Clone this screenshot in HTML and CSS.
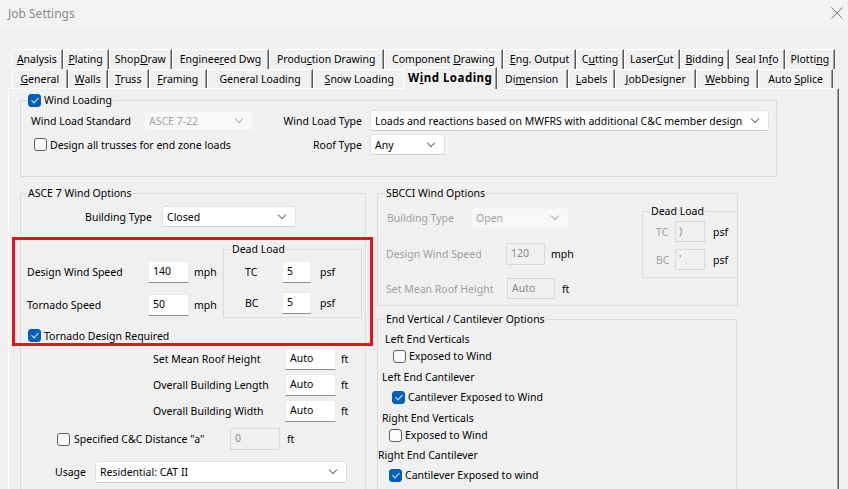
FILE: index.html
```html
<!DOCTYPE html>
<html>
<head>
	<meta charset="utf-8">
	<title>Job Settings</title>
	<link rel="stylesheet" href="styles.css">
</head>
<body>
	<div class="titlebar">
		<span class="title">Job Settings</span>
		<svg class="close" width="12" height="12" viewBox="0 0 12 12"><path d="M0.5 0.5L11.5 11.5M11.5 0.5L0.5 11.5" stroke="#7a7a7a" stroke-width="1"/></svg>
	</div>

	<div class="tabs">
		<ul class="tabrow back">
			<li><u>A</u>nalysis</li>
			<li><u>P</u>lating</li>
			<li>Shop<u>D</u>raw</li>
			<li>Enginee<u>r</u>ed Dwg</li>
			<li>Produ<u>c</u>tion Drawing</li>
			<li>Component <u>D</u>rawing</li>
			<li><u>E</u>ng. Output</li>
			<li>C<u>u</u>tting</li>
			<li>Laser<u>C</u>ut</li>
			<li><u>B</u>idding</li>
			<li>Seal In<u>f</u>o</li>
			<li>Plotti<u>n</u>g</li>
		</ul>
		<ul class="tabrow front">
			<li><u>G</u>eneral</li>
			<li><u>W</u>alls</li>
			<li><u>T</u>russ</li>
			<li><u>F</u>raming</li>
			<li>General Loading</li>
			<li><u>S</u>now Loading</li>
			<li class="current"><span class="face">W<u>i</u>nd Loading</span></li>
			<li>Di<u>m</u>ension</li>
			<li><u>L</u>abels</li>
			<li><u>J</u>obDesigner</li>
			<li><u>W</u>ebbing</li>
			<li>Auto <u>S</u>plice</li>
		</ul>
	</div>

	<div class="panel">
		<fieldset class="grp wind">
			<legend><span class="check"><span class="cb on"></span>Wind Loading</span></legend>
			<div class="wind-grid">
				<span>Wind Load Standard</span>
				<span class="combo off std">ASCE 7-22</span>
				<span class="rlabel">Wind Load Type</span>
				<span class="combo">Loads and reactions based on MWFRS with additional C&amp;C member design</span>
				<span class="check endzone"><span class="cb"></span>Design all trusses for end zone loads</span>
				<span class="rlabel">Roof Type</span>
				<span class="combo roof">Any</span>
			</div>
		</fieldset>

		<div class="cols">
			<fieldset class="grp asce">
				<legend>ASCE 7 Wind Options</legend>
				<div class="bt-row">
					<span class="rlabel">Building Type</span>
					<span class="combo">Closed</span>
				</div>

				<div class="redbox">
					<div class="red-top">
						<div class="speeds">
							<span>Design Wind Speed</span>
							<span class="field">140</span>
							<span class="unit">mph</span>
							<span>Tornado Speed</span>
							<span class="field">50</span>
							<span class="unit">mph</span>
						</div>
						<fieldset class="grp dl">
							<legend>Dead Load</legend>
							<div class="dl-grid">
								<span>TC</span>
								<span class="field">5</span>
								<span class="unit">psf</span>
								<span>BC</span>
								<span class="field">5</span>
								<span class="unit">psf</span>
							</div>
						</fieldset>
					</div>
					<span class="check tornado"><span class="cb on"></span>Tornado Design Required</span>
				</div>

				<div class="dims">
					<span>Set Mean Roof Height</span>
					<span class="field">Auto</span>
					<span class="unit">ft</span>
					<span>Overall Building Length</span>
					<span class="field">Auto</span>
					<span class="unit">ft</span>
					<span>Overall Building Width</span>
					<span class="field">Auto</span>
					<span class="unit">ft</span>
				</div>

				<div class="cc-row">
					<span class="check cc-label"><span class="cb"></span>Specified C&amp;C Distance "a"</span>
					<span class="field off w50">0</span>
					<span>ft</span>
				</div>

				<div class="usage-row">
					<span class="usage-label">Usage</span>
					<span class="combo usage">Residential: CAT II</span>
				</div>
			</fieldset>

			<div class="rightcol">
				<fieldset class="grp sbcci">
					<legend>SBCCI Wind Options</legend>
					<div class="sb-body">
						<div class="sb-left">
							<div class="sb-row first">
								<span class="dim sb-bt">Building Type</span>
								<span class="combo off open">Open</span>
							</div>
							<div class="sb-row second">
								<span class="dim sb-lbl">Design Wind Speed</span>
								<span class="field off w39">120</span>
								<span>mph</span>
							</div>
							<div class="sb-row third">
								<span class="dim sb-lbl">Set Mean Roof Height</span>
								<span class="field off w48">Auto</span>
								<span>ft</span>
							</div>
						</div>
						<fieldset class="grp sb-dl">
							<legend>Dead Load</legend>
							<div class="sb-dl-grid">
								<span class="dim">TC</span>
								<span class="field off">)</span>
								<span class="unit">psf</span>
								<span class="dim">BC</span>
								<span class="field off">'</span>
								<span class="unit">psf</span>
							</div>
						</fieldset>
					</div>
				</fieldset>

				<fieldset class="grp ev">
					<legend>End Vertical / Cantilever Options</legend>
					<div class="ev-block b1">
						<div class="ev-head">Left End Verticals</div>
						<span class="check ev-cb"><span class="cb"></span>Exposed to Wind</span>
					</div>
					<div class="ev-block b2">
						<div class="ev-head">Left End Cantilever</div>
						<span class="check ev-cb"><span class="cb on"></span>Cantilever Exposed to Wind</span>
					</div>
					<div class="ev-block b3">
						<div class="ev-head">Right End Verticals</div>
						<span class="check ev-cb"><span class="cb"></span>Exposed to Wind</span>
					</div>
					<div class="ev-block b4">
						<div class="ev-head">Right End Cantilever</div>
						<span class="check ev-cb"><span class="cb on"></span>Cantilever Exposed to wind</span>
					</div>
				</fieldset>
			</div>
		</div>
	</div>
</body>
</html>
```

FILE: styles.css
```css
*{margin: 0;padding: 0;box-sizing: border-box;}
ul{list-style: none;}
body {
	background: #f0f0f0;
	font: 10.5px/16px "Noto Sans", "Segoe UI", sans-serif;
	color: #000;
	height: 489px;
	overflow: hidden;
}
u {
	text-decoration: underline;
	text-underline-offset: 1px;
}

/* title bar */
.titlebar {
	height: 28px;
	display: flex;
	align-items: center;
	justify-content: space-between;
	padding: 0 5px 0 8px;
	background: #f3f3f3;
}
.title {
	color: #8c8c8c;
	font-size: 12px;
}
.close {
	margin-top: -2px;
}

/* tabs - table layout stretches each row like the win32 control does */
.tabs {
	margin-top: 21px;
}
.tabrow {
	display: table;
	table-layout: auto;
	border-collapse: separate;
}
.tabrow.back {
	width: 824px;
	height: 20px;
	margin-left: 11px;
}
.tabrow.front {
	width: 821px;
	height: 19px;
	margin-left: 12px;
}
.tabrow li {
	display: table-cell;
	vertical-align: middle;
	text-align: center;
	white-space: nowrap;
	padding: 0 3px 1px;
	border-top: 1px solid #fff;
	border-left: 1px solid #fff;
	border-right: 1px solid #5a5a5a;
	box-shadow: inset -1px 0 #a0a0a0;
}
.tabrow li.current {
	width: 90px;
	padding: 0;
	border: 0;
	box-shadow: none;
}
.tabrow .face {
	display: block;
	position: relative;
	z-index: 1;
	width: 94px;
	margin: -2px -2px -1px;
	height: 22px;
	line-height: 20px;
	font-size: 11.5px;
	letter-spacing: 0.5px;
	font-weight: bold;
	background: #f0f0f0;
	border-top: 1px solid #fff;
	border-left: 1px solid #fff;
	border-right: 1px solid #5a5a5a;
	box-shadow: inset -1px 0 #a0a0a0;
}

/* panel */
.panel {
	margin-left: 8px;
	width: 831px;
	height: 401px;
	border-top: 1px solid #fff;
	border-left: 1px solid #fff;
	border-right: 1px solid #5a5a5a;
	box-shadow: inset -1px 0 #a0a0a0;
}

/* group boxes */
.grp {
	border: 1px solid #dcdcdc;
	min-width: 0;
}
.grp legend {
	margin-left: 6px;
	padding: 0 1px;
	line-height: 14px;
}

/* controls */
.check {
	display: flex;
	align-items: center;
	gap: 3px;
	white-space: nowrap;
}
.cb {
	flex: none;
	width: 13px;
	height: 13px;
	border: 1px solid #5c5c5c;
	border-radius: 3px;
	background: #fbfbfb;
	display: inline-flex;
	align-items: center;
	justify-content: center;
}
.cb.on {
	background: #005fb8;
	border-color: #005fb8;
}
.cb.on::after {
	content: "";
	width: 3px;
	height: 6px;
	margin-top: -2px;
	border: solid #dce8f6;
	border-width: 0 1px 1px 0;
	transform: rotate(45deg);
}
.combo {
	display: flex;
	align-items: center;
	justify-content: space-between;
	height: 21px;
	padding-left: 4px;
	background: #fff;
	border: 1px solid #e2e2e2;
	border-bottom-color: #cdcdcd;
	border-radius: 3px;
	white-space: nowrap;
}
.combo::after {
	content: "";
	flex: none;
	width: 5px;
	height: 5px;
	margin: -4px 10px 0 0;
	border-right: 1px solid #707070;
	border-bottom: 1px solid #707070;
	transform: rotate(45deg);
}
.combo.off {
	background: #f8f8f8;
	border-color: #f4f4f4;
	color: #a4a4a4;
}
.combo.off::after {
	border-color: #b4b4b4;
}
.field {
	display: block;
	height: 22px;
	padding: 1px 4px;
	background: #fff;
	border: 1px solid #ececec;
	border-bottom-color: #8d8d8d;
	white-space: nowrap;
	overflow: hidden;
}
.field.off {
	background: #f0f0f0;
	border-color: #dadada;
	color: #8a8a8a;
}
.dim {
	color: #a0a0a0;
}
.rlabel {
	text-align: right;
	padding-right: 8px;
}

/* wind loading group */
.wind {
	width: 757px;
	margin: 4px 0 0 11px;
}
.wind-grid {
	display: grid;
	grid-template-columns: 113px 109px 117px 399px;
	grid-auto-rows: 21px;
	row-gap: 3px;
	align-items: center;
	padding: 3px 0 21px 10px;
}
.wind-grid .std {
	height: 19px;
}
.wind-grid .roof {
	width: 75px;
}
.endzone {
	grid-column: span 2;
	margin-left: 3px;
}

/* columns */
.cols {
	display: flex;
	gap: 11px;
	margin: 9px 0 0 11px;
}
.asce {
	width: 346px;
	height: 320px;
}
.bt-row {
	display: grid;
	grid-template-columns: 131px 134px;
	column-gap: 10px;
	align-items: center;
	margin-top: 6px;
}
.bt-row .rlabel {
	padding-right: 0;
}

/* highlighted block */
.redbox {
	margin: 10px -8px 0 -9px;
	border: 3px solid #e3151a;
}
.red-top {
	display: flex;
	align-items: flex-start;
}
.speeds {
	width: 208px;
	display: grid;
	grid-template-columns: 121px 41px auto;
	grid-auto-rows: 22px;
	row-gap: 11px;
	align-items: center;
	padding: 21px 0 0 12px;
}
.speeds .unit {
	margin-left: 5px;
}
.dl {
	width: 139px;
	margin-top: 2px;
}
.dl legend {
	margin-left: 7px;
}
.dl-grid {
	display: grid;
	grid-template-columns: 37px 29px auto;
	grid-auto-rows: 22px;
	row-gap: 9px;
	align-items: center;
	padding: 5px 0 3px 21px;
}
.dl-grid .unit {
	margin-left: 9px;
}
.tornado {
	height: 15px;
	margin: 10px 0 0 13px;
}

.dims {
	display: grid;
	grid-template-columns: 132px 51px auto;
	grid-auto-rows: 22px;
	row-gap: 4px;
	align-items: center;
	margin: 2px 0 0 132px;
}
.dims .unit {
	margin-left: 5px;
}
.cc-row {
	display: flex;
	align-items: center;
	gap: 7px;
	margin: 6px 0 0 36px;
}
.cc-label {
	width: 166px;
	gap: 4px;
}
.w50 {
	width: 50px;
}
.usage-row {
	display: flex;
	align-items: center;
	margin: 11px 0 0 34px;
}
.usage-label {
	width: 40px;
}
.usage {
	width: 252px;
	height: 22px;
}

/* SBCCI group */
.sbcci {
	width: 361px;
	height: 120px;
}
.sbcci legend,
.ev legend {
	margin-left: 7px;
}
.sb-body {
	display: flex;
	justify-content: space-between;
	align-items: flex-start;
}
.sb-row {
	display: flex;
	align-items: center;
}
.sb-row.first {
	margin: 8px 0 0 9px;
}
.sb-row.second {
	margin: 15px 0 0 8px;
	gap: 6px;
}
.sb-row.third {
	margin: 13px 0 0 8px;
	gap: 7px;
}
.sb-bt {
	width: 84px;
}
.sb-lbl {
	width: 114px;
}
.open {
	width: 98px;
	height: 20px;
}
.w39 {
	width: 39px;
}
.w48 {
	width: 48px;
	height: 21px;
}
.sb-dl {
	width: 96px;
	height: 74px;
	margin: 4px -1px 0 0;
}
.sb-dl-grid {
	display: grid;
	grid-template-columns: 19px 30px auto;
	grid-auto-rows: 21px;
	row-gap: 7px;
	align-items: center;
	padding: 3px 0 0 13px;
}
.sb-dl-grid .unit {
	margin-left: 8px;
}
.sb-dl-grid .field {
	height: 21px;
	padding: 1px 3px;
}

/* end vertical group */
.ev {
	width: 360px;
	height: 200px;
	margin-top: 6px;
}
.ev-block {
	margin-top: 5px;
}
.ev-block.b4 {
	margin-top: 4px;
}
.ev-cb {
	height: 16px;
	margin-top: 1px;
	gap: 3px;
}
.b1 .ev-head { margin-left: 7px; }
.b1 .ev-cb { margin-left: 15px; }
.b2 .ev-head { margin-left: 4px; }
.b2 .ev-cb { margin-left: 14px; margin-top: 4px; }
.b3 .ev-head { margin-left: 4px; }
.b3 .ev-cb { margin-left: 11px; }
.b4 .ev-head { margin-left: 0; }
.b4 .ev-cb { margin-left: 11px; margin-top: 4px; }
```
